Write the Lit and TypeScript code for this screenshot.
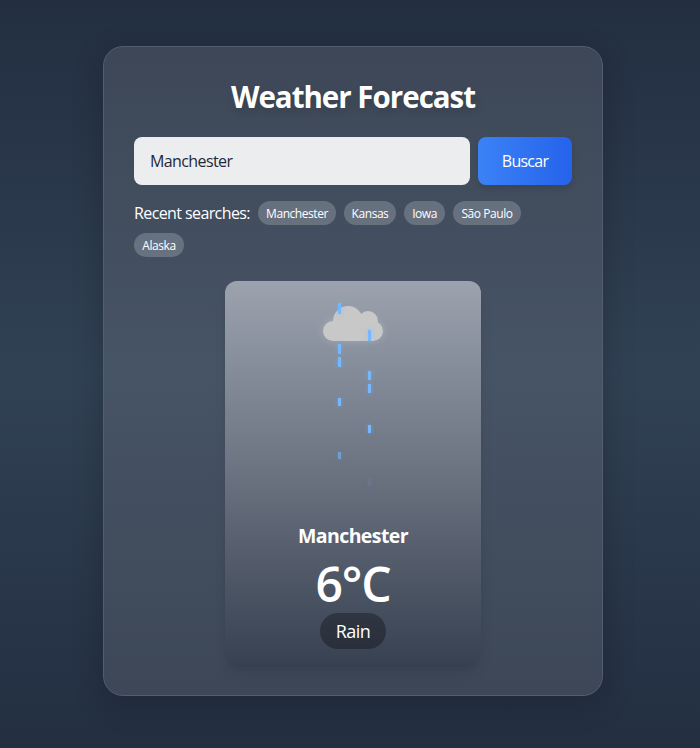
import { LitElement, html, css } from "lit";
import { customElement, state } from "lit/decorators.js";
import { styleMap } from "lit/directives/style-map.js";

interface Drop {
  x: number;
  y: number;
  h: number;
  o: number;
}

@customElement("rain-scene")
class RainScene extends LitElement {
  static styles = css`
    :host { display: block; position: relative; width: 60px; height: 200px; }
    .cloud {
      position: absolute; left: 0; top: 24px; width: 60px; height: 20px;
      border-radius: 10px; background: #c8c8c8;
      box-shadow: 0 0 10px rgba(255, 255, 255, 0.2);
    }
    .puff { position: absolute; border-radius: 50%; background: #c8c8c8; }
    .big { width: 30px; height: 30px; left: 10px; top: -15px; }
    .small { width: 20px; height: 20px; left: 35px; top: -10px; }
    .drop {
      position: absolute; width: 3px; background: #74b9ff;
      box-shadow: 0 0 5px rgba(116, 185, 255, 0.5);
    }
  `;

  private drops: Drop[] = [
    { x: 15, y: 6, h: 11, o: 1 },
    { x: 45, y: 33, h: 11, o: 1 },
    { x: 15, y: 47, h: 10, o: 1 },
    { x: 15, y: 60, h: 10, o: 1 },
    { x: 45, y: 74, h: 9, o: 1 },
    { x: 45, y: 87, h: 9, o: 1 },
    { x: 15, y: 101, h: 8, o: 1 },
    { x: 45, y: 128, h: 8, o: 1 },
    { x: 15, y: 155, h: 7, o: 0.6 },
    { x: 45, y: 182, h: 6, o: 0.1 },
  ];

  render() {
    return html`
      <div class="cloud"><div class="puff big"></div><div class="puff small"></div></div>
      ${this.drops.map(
        (d) => html`<div class="drop" style=${styleMap({
          left: d.x + "px", top: d.y + "px", height: d.h + "px", opacity: String(d.o),
        })}></div>`
      )}
    `;
  }
}

@customElement("app-root")
class AppRoot extends LitElement {
  static styles = css`
    :host {
      display: flex; justify-content: center; box-sizing: border-box;
      height: 748px; padding: 46px 0 0 6px; overflow: hidden;
      background: linear-gradient(180deg, #232e41 0%, #314154 50%, #232e41 100%);
      font-family: "Segoe UI", "Open Sans", "Noto Sans", sans-serif;
      color: #fff;
    }
    * { box-sizing: border-box; }
    .panel {
      width: 500px; height: 650px; padding: 30px; border-radius: 20px;
      border: 1px solid #525e6d;
      background: linear-gradient(180deg, #3d4757, #475465 50%, #3d4757);
      box-shadow: 0 8px 32px rgba(0, 0, 0, 0.2);
      display: flex; flex-direction: column;
    }
    h1 {
      margin: 0 0 20px; height: 40px; line-height: 40px; text-align: center;
      font-size: 29.5px; font-weight: 700; letter-spacing: -1px; white-space: nowrap;
      text-shadow: 2px 4px 8px rgba(0, 0, 0, 0.12);
    }
    .search { display: flex; gap: 8px; height: 48px; }
    input {
      flex: 1; min-width: 0; border: 0; outline: 0; border-radius: 8px; padding: 0 16px;
      background: rgba(255, 255, 255, 0.9); color: #1f2937;
      font: 400 16px "Segoe UI", "Open Sans", "Noto Sans", sans-serif;
      letter-spacing: -0.6px;
    }
    button { font-family: inherit; border: 0; color: #fff; padding: 0; }
    .go {
      width: 94px; border-radius: 8px; font-size: 16px; letter-spacing: -0.75px;
      background: linear-gradient(90deg, #3b82f6, #2563eb);
      box-shadow: 0 4px 6px rgba(0, 0, 0, 0.1);
    }
    .recent { display: flex; flex-wrap: wrap; gap: 8px; margin-top: 16px; }
    .label {
      width: 116px; height: 24px; line-height: 25px; font-size: 16px;
      white-space: nowrap; letter-spacing: -0.6px;
    }
    .chip {
      height: 24px; border-radius: 12px; font-size: 12px; padding-top: 1px;
      font-weight: 500; letter-spacing: -0.45px;
      background: rgba(255, 255, 255, 0.2); white-space: nowrap;
    }
    .weather {
      align-self: center; width: 256px; height: 387px; margin-top: 24px; padding-top: 16px;
      border-radius: 12px; display: flex; flex-direction: column; align-items: center;
      background: linear-gradient(180deg, #9ca3af, #6b7280 50%, #374151);
      box-shadow: 0 10px 15px -3px rgba(0, 0, 0, 0.1), 0 4px 6px -4px rgba(0, 0, 0, 0.1);
    }
    .city {
      margin-top: 25px; height: 28px; line-height: 28px; font-size: 19.5px; font-weight: 700;
      letter-spacing: -0.6px;
    }
    .temp {
      margin-top: 10px; height: 53px; line-height: 48px; font-size: 48px; font-weight: 600;
      letter-spacing: -1.2px;
    }
    .state {
      width: 66px; height: 36px; line-height: 36px; border-radius: 18px; text-align: center;
      font-size: 18px; letter-spacing: -0.5px; background: rgba(0, 0, 0, 0.3);
    }
  `;

  @state() private city = "Manchester";

  private recent: [string, number][] = [
    ["Manchester", 78], ["Kansas", 52], ["Iowa", 41], ["São Paulo", 68], ["Alaska", 50],
  ];

  render() {
    return html`
      <main class="panel">
        <h1>Weather Forecast</h1>
        <div class="search">
          <input type="text" .value=${this.city} />
          <button class="go">Buscar</button>
        </div>
        <div class="recent">
          <span class="label">Recent searches:</span>
          ${this.recent.map(
            ([name, w]) => html`<button class="chip" style=${styleMap({ width: w + "px" })}>${name}</button>`
          )}
        </div>
        <section class="weather">
          <rain-scene></rain-scene>
          <div class="city">${this.city}</div>
          <div class="temp">6°C</div>
          <div class="state">Rain</div>
        </section>
      </main>
    `;
  }
}
